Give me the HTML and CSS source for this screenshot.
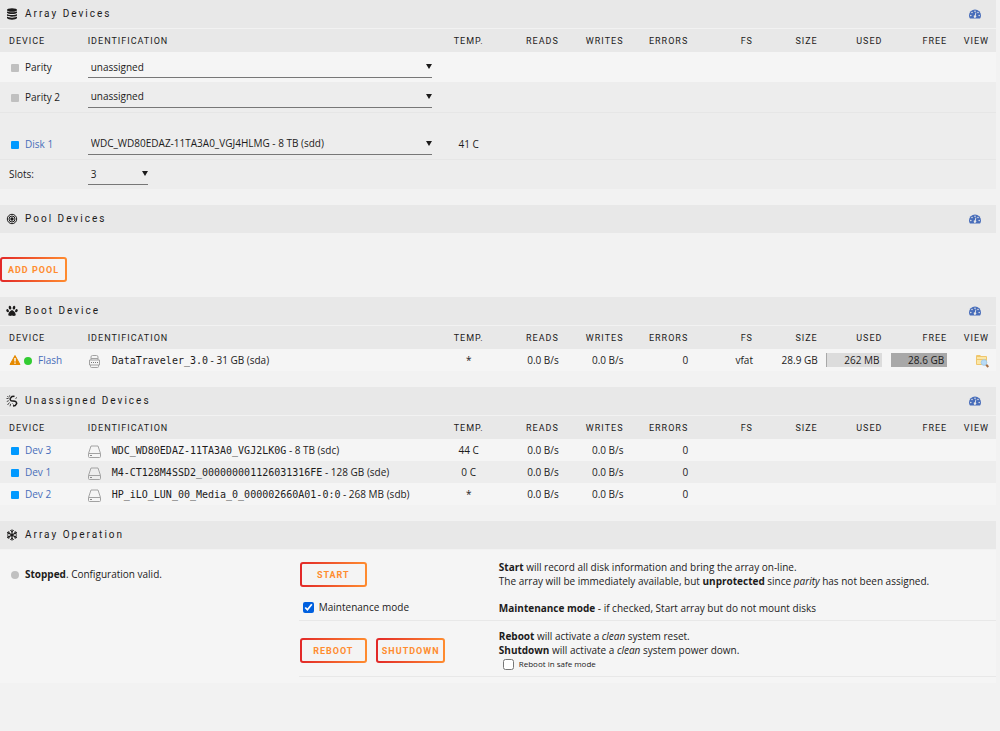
FILE: index.html
```html
<!DOCTYPE html>
<html lang="en">
<head>
    <meta charset="UTF-8">
    <meta name="viewport" content="width=device-width, initial-scale=1.0">
    <title>Main</title>
    <link rel="stylesheet" href="styles.css">
</head>
<body>
    <!-- shared icons -->
    <svg class="sprite" aria-hidden="true">
        <symbol id="gauge" viewBox="0 0 24 20">
            <path fill="currentColor" d="M12 1A12 12 0 0 0 0 13c0 2 .6 4 1.600 5.600.3.300.6.400 1 .4h18.800c.4 0 .7-.1 1-.4A11 11 0 0 0 24 13 12 12 0 0 0 12 1z"/>
            <g fill="#e8e8e8">
                <circle cx="3.600" cy="13" r="1.500"/>
                <circle cx="6" cy="7" r="1.500"/>
                <circle cx="12" cy="4.500" r="1.500"/>
                <circle cx="18" cy="7" r="1.500"/>
                <circle cx="20.400" cy="13" r="1.500"/>
                <path d="M13 7l1.700.5-1.300 5.200a2.600 2.600 0 1 1-1.800-.4z"/>
            </g>
        </symbol>
        <symbol id="disk" viewBox="0 0 13 13">
            <path fill="none" stroke="#a2a2a2" d="M.5 8.500L3 1h7l2.500 7.500v3a1 1 0 0 1-1 1h-10a1 1 0 0 1-1-1zM.5 8.500h12"/>
            <path stroke="#8a8a8a" d="M2 10.500h2"/>
        </symbol>
    </svg>

    <section class="panel">
        <h2 class="title">
            <svg class="title-icon" viewBox="0 0 12 12">
                <ellipse cx="6" cy="2" rx="5" ry="1.800"/>
                <path d="M1 3.200c1 1.500 9 1.500 10 0v1.600c-1 1.600-9 1.600-10 0zM1 5.900c1 1.500 9 1.500 10 0v1.600c-1 1.600-9 1.600-10 0zM1 8.600c1 1.500 9 1.500 10 0v1.500c-1 2.300-9 2.300-10 0z"/>
            </svg>
            <span>Array Devices</span>
            <a class="toggle" href="#" aria-label="Toggle reads/writes"><svg><use href="#gauge"/></svg></a>
        </h2>
        <table class="disks">
            <thead>
                <tr>
                    <th class="device">Device</th>
                    <th class="ident">Identification</th>
                    <th class="temp">Temp.</th>
                    <th>Reads</th>
                    <th>Writes</th>
                    <th>Errors</th>
                    <th>FS</th>
                    <th>Size</th>
                    <th>Used</th>
                    <th>Free</th>
                    <th class="view">View</th>
                </tr>
            </thead>
            <tbody class="slots">
                <tr class="light">
                    <td><i class="orb square grey"></i><label for="parity">Parity</label></td>
                    <td colspan="10"><div class="pick"><select id="parity"><option>unassigned</option></select></div></td>
                </tr>
                <tr class="ruled">
                    <td><i class="orb square grey"></i><label for="parity2">Parity 2</label></td>
                    <td colspan="10"><div class="pick"><select id="parity2"><option>unassigned</option></select></div></td>
                </tr>
                <tr class="spacer"><td colspan="11"></td></tr>
                <tr class="ruled">
                    <td><i class="orb square blue"></i><a href="#">Disk 1</a></td>
                    <td><div class="pick"><select aria-label="Disk 1"><option>WDC_WD80EDAZ-11TA3A0_VGJ4HLMG - 8 TB (sdd)</option></select></div></td>
                    <td class="temp">41 C</td>
                    <td colspan="8"></td>
                </tr>
                <tr>
                    <td><label for="slots">Slots:</label></td>
                    <td colspan="10"><div class="pick short"><select id="slots"><option>3</option></select></div></td>
                </tr>
            </tbody>
        </table>
    </section>

    <section class="panel">
        <h2 class="title">
            <svg class="title-icon" viewBox="0 0 12 12">
                <g fill="none" stroke="#1c1b1b">
                    <circle cx="6" cy="6" r="4.700"/>
                    <circle cx="6" cy="6" r="3"/>
                </g>
                <circle cx="6" cy="6" r="1.700"/>
            </svg>
            <span>Pool Devices</span>
            <a class="toggle" href="#" aria-label="Toggle reads/writes"><svg><use href="#gauge"/></svg></a>
        </h2>
        <div class="pool-actions"><button type="button">Add Pool</button></div>
    </section>

    <section class="panel">
        <h2 class="title">
            <svg class="title-icon" viewBox="0 0 12 12">
                <ellipse cx="4" cy="2.700" rx="1.300" ry="1.900" transform="rotate(-12 4 2.700)"/>
                <ellipse cx="8" cy="2.700" rx="1.300" ry="1.900" transform="rotate(12 8 2.700)"/>
                <ellipse cx="1.600" cy="5.700" rx="1.200" ry="1.700" transform="rotate(-25 1.600 5.700)"/>
                <ellipse cx="10.400" cy="5.700" rx="1.200" ry="1.700" transform="rotate(25 10.400 5.700)"/>
                <path d="M6 5.300c1.600 0 3.700 2.600 3.700 4.300 0 1.200-1 1.400-1.700 1.400-.8 0-1.200-.5-2-.5s-1.200.5-2 .5c-.7 0-1.700-.2-1.700-1.400C2.300 7.900 4.400 5.300 6 5.300z"/>
            </svg>
            <span>Boot Device</span>
            <a class="toggle" href="#" aria-label="Toggle reads/writes"><svg><use href="#gauge"/></svg></a>
        </h2>
        <table class="disks">
            <thead>
                <tr>
                    <th class="device">Device</th>
                    <th class="ident">Identification</th>
                    <th class="temp">Temp.</th>
                    <th>Reads</th>
                    <th>Writes</th>
                    <th>Errors</th>
                    <th>FS</th>
                    <th>Size</th>
                    <th>Used</th>
                    <th>Free</th>
                    <th class="view">View</th>
                </tr>
            </thead>
            <tbody>
                <tr>
                    <td>
                        <svg class="warning" viewBox="0 0 12 12">
                            <path fill="#e68a00" stroke="#e68a00" stroke-linejoin="round" d="M6 1.500L11 10.500H1z"/>
                            <path stroke="#fff" stroke-width="1.400" d="M6 4v3.500M6 8.500v1.300"/>
                        </svg><i class="orb green"></i><a href="#">Flash</a>
                    </td>
                    <td>
                        <svg class="drive" viewBox="0 0 13 13">
                            <path fill="none" stroke="#a2a2a2" d="M3 5V2q0-1.500 1.500-1.500h4q1.500 0 1.500 1.500v3M1.500 5h10v5h-10zM2.500 10v1.500q0 1 1 1h6q1 0 1-1V10M3 3.500h7"/>
                            <path stroke="#777" stroke-dasharray="1 1" d="M3 7.500h7"/>
                        </svg><span class="serial">DataTraveler_3.0</span> - 31 GB (sda)
                    </td>
                    <td class="temp">*</td>
                    <td class="num">0.0 B/s</td>
                    <td class="num">0.0 B/s</td>
                    <td class="num">0</td>
                    <td class="num">vfat</td>
                    <td class="num">28.9 GB</td>
                    <td class="num"><div class="bar"><span style="width: 1%"></span><b>262 MB</b></div></td>
                    <td class="num"><div class="bar"><span style="width: 99%"></span><b>28.6 GB</b></div></td>
                    <td class="view">
                        <a href="#" aria-label="Browse Flash">
                            <svg class="browse" viewBox="0 0 14 14">
                                <path fill="#efc66c" d="M1 2q0-1 1-1h3l1 1h5q1 0 1 1v7q0 1-1 1H2q-1 0-1-1z"/>
                                <path fill="#fbe6a6" d="M2 3h9v2H2zM2 6h9v4H2z"/>
                                <path stroke="#a76f43" stroke-width="2" d="M11 10.500l2.300 2.500"/>
                                <circle cx="9" cy="8.500" r="2.800" fill="#b9dbf5" stroke="#a5cdec"/>
                            </svg>
                        </a>
                    </td>
                </tr>
            </tbody>
        </table>
    </section>

    <section class="panel">
        <h2 class="title">
            <svg class="title-icon" viewBox="0 0 12 12">
                <g fill="none" stroke="#1c1b1b">
                    <path stroke-width="1.500" d="M8.500 1.200L6 1.500 4.200 3.500q-.4 1.500 1 2.300L9 6.300q1.800.7 1.700 2.200L9.200 10.600 7 11"/>
                    <path stroke-width=".8" d="M.5 3.500h2M1.300 1l1.500 1.500M3.700.3v1.500M.8 6.500l2-.8M1.500 10l2-2.500M4 11.300l.7-2.500M9.500 3.500l1.500-1M6.500 8.500l1 1"/>
                </g>
            </svg>
            <span>Unassigned Devices</span>
            <a class="toggle" href="#" aria-label="Toggle reads/writes"><svg><use href="#gauge"/></svg></a>
        </h2>
        <table class="disks">
            <thead>
                <tr>
                    <th class="device">Device</th>
                    <th class="ident">Identification</th>
                    <th class="temp">Temp.</th>
                    <th>Reads</th>
                    <th>Writes</th>
                    <th>Errors</th>
                    <th>FS</th>
                    <th>Size</th>
                    <th>Used</th>
                    <th>Free</th>
                    <th class="view">View</th>
                </tr>
            </thead>
            <tbody>
                <tr>
                    <td><i class="orb square blue"></i><a href="#">Dev 3</a></td>
                    <td><svg class="drive"><use href="#disk"/></svg><span class="serial">WDC_WD80EDAZ-11TA3A0_VGJ2LK0G</span> - 8 TB (sdc)</td>
                    <td class="temp">44 C</td>
                    <td class="num">0.0 B/s</td>
                    <td class="num">0.0 B/s</td>
                    <td class="num">0</td>
                    <td colspan="5"></td>
                </tr>
                <tr>
                    <td><i class="orb square blue"></i><a href="#">Dev 1</a></td>
                    <td><svg class="drive"><use href="#disk"/></svg><span class="serial">M4-CT128M4SSD2_000000001126031316FE</span> - 128 GB (sde)</td>
                    <td class="temp">0 C</td>
                    <td class="num">0.0 B/s</td>
                    <td class="num">0.0 B/s</td>
                    <td class="num">0</td>
                    <td colspan="5"></td>
                </tr>
                <tr>
                    <td><i class="orb square blue"></i><a href="#">Dev 2</a></td>
                    <td><svg class="drive"><use href="#disk"/></svg><span class="serial">HP_iLO_LUN_00_Media_0_000002660A01-0:0</span> - 268 MB (sdb)</td>
                    <td class="temp">*</td>
                    <td class="num">0.0 B/s</td>
                    <td class="num">0.0 B/s</td>
                    <td class="num">0</td>
                    <td colspan="5"></td>
                </tr>
            </tbody>
        </table>
    </section>

    <section class="panel">
        <h2 class="title">
            <svg class="title-icon" viewBox="0 0 12 12">
                <g fill="none" stroke="#1c1b1b">
                    <path stroke-width="1.200" d="M6 .5v11M1.200 3.200l9.600 5.600M1.200 8.800l9.600-5.600"/>
                    <path d="M4.300 1.200L6 2.900l1.700-1.700M4.300 10.800L6 9.100l1.700 1.700M1 5.200l2.300-.7-.6-2.300M11 5.200l-2.300-.7.6-2.300M1 6.800l2.300.7-.6 2.300M11 6.800l-2.300.7.6 2.300"/>
                </g>
            </svg>
            <span>Array Operation</span>
        </h2>
        <div class="operation">
            <div class="status"><i class="orb grey"></i><b>Stopped</b>. Configuration valid.</div>
            <div class="actions">
                <div class="action">
                    <div class="controls">
                        <button type="button">Start</button>
                        <div class="check"><input type="checkbox" id="maintenance" checked><label for="maintenance">Maintenance mode</label></div>
                    </div>
                    <div class="help">
                        <p><b>Start</b> will record all disk information and bring the array on-line.<br>
                        The array will be immediately available, but <b>unprotected</b> since <em>parity</em> has not been assigned.</p>
                        <p><b>Maintenance mode</b> - if checked, Start array but do not mount disks</p>
                    </div>
                </div>
                <div class="action">
                    <div class="controls power">
                        <button type="button">Reboot</button>
                        <button type="button">Shutdown</button>
                    </div>
                    <div class="help">
                        <p><b>Reboot</b> will activate a <em>clean</em> system reset.<br>
                        <b>Shutdown</b> will activate a <em>clean</em> system power down.</p>
                        <div class="check small"><input type="checkbox" id="safemode"><label for="safemode">Reboot in safe mode</label></div>
                    </div>
                </div>
            </div>
        </div>
    </section>
</body>
</html>
```
FILE: styles.css
```css
* {
    box-sizing: border-box;
}

body {
    margin: 0;
    padding-right: 4px;
    background: #f2f2f2;
    color: #1c1b1b;
    font-family: "Open Sans", sans-serif;
    font-size: 10px;
    line-height: 14px;
}

a {
    color: #486dba;
    text-decoration: none;
}

p {
    margin: 0;
}

.sprite {
    position: absolute;
    width: 0;
    height: 0;
}

.panel {
    margin-bottom: 16px;
}

/* section headings */
.title {
    display: flex;
    align-items: center;
    gap: 7px;
    height: 28px;
    margin: 0 0 1px;
    padding: 0 15px 0 6px;
    background: #e8e8e8;
    font-family: Roboto, sans-serif;
    font-size: 10px;
    font-weight: normal;
    letter-spacing: 2px;
}

.title-icon {
    width: 12px;
    height: 12px;
    fill: #1c1b1b;
}

.toggle {
    display: flex;
    margin-left: auto;
}

.toggle svg {
    width: 12px;
    height: 10px;
}

/* device tables */
.disks {
    width: 100%;
    table-layout: fixed;
    border-collapse: collapse;
}

.disks th {
    width: 6.5%;
    height: 23px;
    padding: 0 7px 0 0;
    background: #e8e8e8;
    font-family: Roboto, sans-serif;
    font-size: 9px;
    font-weight: normal;
    text-align: right;
    text-transform: uppercase;
    letter-spacing: 1px;
    white-space: nowrap;
}

.disks th.device {
    width: 8%;
    padding-left: 9px;
    text-align: left;
}

.disks th.ident {
    width: auto;
    padding-left: 8px;
    text-align: left;
}

.disks th.view {
    width: 4.2%;
}

.disks th.temp,
.disks td.temp {
    padding: 0;
    text-align: center;
}

.disks td {
    height: 22px;
    padding: 0 0 0 8px;
    white-space: nowrap;
}

.disks td:first-child {
    padding-left: 9px;
}

.disks td.num,
.disks td.view {
    padding: 0 7px 0 0;
    text-align: right;
}

.disks tbody tr {
    background: #f5f5f5;
}

.disks tbody tr:nth-child(even) {
    background: #ededed;
}

.disks .slots tr,
.disks .slots tr:nth-child(even) {
    background: #ededed;
}

.disks .slots tr.light {
    background: #f5f5f5;
}

.disks .slots tr.ruled {
    border-bottom: 1px solid #e6e6e6;
}

.disks .slots td {
    height: 30px;
}

.disks .slots .spacer td {
    height: 17px;
}

.orb {
    display: inline-block;
    width: 8px;
    height: 8px;
    margin: 0 6px 0 2px;
    border-radius: 50%;
    vertical-align: -1px;
}

.orb.square {
    border-radius: 1px;
}

.grey {
    background: #c0c0c0;
}

.blue {
    background: #0099ff;
}

.green {
    background: #33cc33;
}

.warning {
    width: 12px;
    height: 12px;
    vertical-align: -2px;
}

.warning + .orb {
    margin-left: 3px;
}

.drive {
    width: 13px;
    height: 13px;
    margin-right: 11px;
    vertical-align: -4px;
}

.serial {
    font-family: "DejaVu Sans Mono", monospace;
}

.browse {
    display: inline-block;
    width: 14px;
    height: 14px;
    vertical-align: middle;
}

.pick {
    position: relative;
    width: 344px;
}

.pick.short {
    width: 60px;
}

.pick::after {
    content: "";
    position: absolute;
    top: 8px;
    right: 0;
    border: 3px solid transparent;
    border-top: 5px solid #1c1b1b;
    border-bottom: 0;
    pointer-events: none;
}

select {
    display: block;
    width: 100%;
    height: 22px;
    padding: 0 12px 0 3px;
    border: 0;
    border-bottom: 1px solid #777;
    border-radius: 0;
    background: none;
    color: inherit;
    font: inherit;
    appearance: none;
}

.bar {
    position: relative;
    width: 56px;
    height: 14px;
    margin-left: auto;
    background: #dcdcdc;
}

.bar span {
    display: block;
    height: 14px;
    background: #a8a8a8;
}

.bar b {
    position: absolute;
    top: 0;
    right: 3px;
    font-weight: normal;
}

/* buttons */
button {
    height: 25px;
    min-width: 67px;
    padding: 0 4px;
    border: 2px solid transparent;
    border-radius: 3px;
    background: linear-gradient(#f4f4f4, #f4f4f4) padding-box, linear-gradient(90deg, #e22828, #ff8c2f) border-box;
    color: #ff8c2f;
    font-family: Roboto, sans-serif;
    font-size: 9px;
    font-weight: bold;
    letter-spacing: 1px;
    text-transform: uppercase;
    cursor: pointer;
}

.pool-actions {
    display: flex;
    padding-top: 23px;
}

.pool-actions button {
    margin-bottom: -1px;
}

/* array operation */
.operation {
    display: flex;
    padding-bottom: 6px;
    background: #f5f5f5;
}

.status {
    width: 30%;
    padding: 17px 0 0 9px;
}

.actions {
    flex: 1;
}

.action {
    display: flex;
    padding: 10px 0 5px;
    border-bottom: 1px solid #e8e8e8;
}

.action + .action {
    padding-top: 8px;
}

.controls {
    width: 200px;
    padding: 2px 0 0 1px;
}

.controls.power {
    display: flex;
    gap: 9px;
    padding-top: 9px;
}

.help {
    flex: 1;
}

.help p + p {
    margin-top: 13px;
}

.check {
    display: flex;
    align-items: center;
    gap: 5px;
    padding: 13px 0 0 3px;
}

.check.small {
    padding: 0 0 0 4px;
    font-size: 8px;
}

.check input {
    width: 11px;
    height: 11px;
    margin: 0;
    accent-color: #0060df;
}
```
